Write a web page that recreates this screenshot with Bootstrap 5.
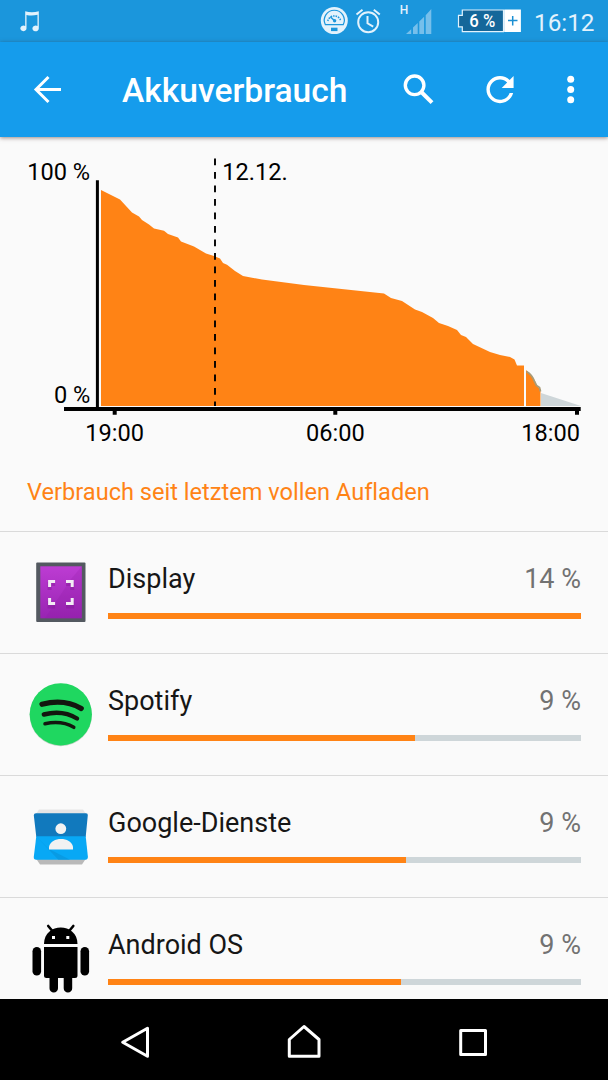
<!DOCTYPE html>
<html lang="de">
<head>
<meta charset="utf-8">
<meta name="viewport" content="width=device-width, initial-scale=1">
<title>Akkuverbrauch</title>
<link href="https://cdn.jsdelivr.net/npm/bootstrap@5.3.0/dist/css/bootstrap.min.css" rel="stylesheet">
<style>
  body { font-family: Roboto, "Noto Sans", sans-serif; font-variant-ligatures: none; background: #fafafa; color: #161616; width: 608px; height: 1080px; }
  svg { display: block; flex: none; }
  .statusbar { height: 42px; background: #1b96dc; color: #e3f2fc; }
  .clock { width: 77px; padding-left: 3px; font-size: 24.3px; line-height: 45px; white-space: nowrap; }
  .appbar { height: 95px; background: #159cec; color: #fff; box-shadow: 0 1px 4px rgba(60,30,20,.5); z-index: 2; }
  .appbar h1 { font-size: 33.6px; font-weight: 500; line-height: 40px; padding-left: 22px; padding-top: 2px; width: 286px; white-space: nowrap; }
  .since { height: 78px; color: #ff8315; font-size: 23.6px; line-height: 28px; padding: 25px 27px 0; }
  .usage-row { height: 122px; border-top: 1px solid #dadada; }
  .usage-body { padding: 30px 27px 0 0; font-size: 27px; line-height: 34px; }
  .share { color: #727272; }
  .usage-bar { height: 6px; margin-top: 17px; border-radius: 0; background: #ced6d9; }
  .usage-bar .progress-bar { background: #ff8315; }
  .navkeys { height: 81px; background: #000; }
</style>
</head>
<body class="d-flex flex-column overflow-hidden">

<header class="statusbar d-flex flex-shrink-0">
  <svg width="60" height="42" viewBox="0 0 60 42" fill="#e3f2fc">
    <path d="M25.2 11.2q6.500 2.100 13.600 0V28.500a3.200 2.900 0 1 1-1.300-2.400V14.800q-5.500 1.400-11 .2V28.500a3.100 2.800 0 1 1-1.300-2.400Z"/>
  </svg>
  <svg class="ms-auto" width="32" height="42" viewBox="319 0 32 42">
    <circle cx="334.300" cy="20.600" r="13.500" fill="#e3f2fc"/>
    <path d="M325.300 24.600a10 10 0 1 1 18 0Z" fill="none" stroke="#1b96dc" stroke-width="1.200"/>
    <path d="M327.800 21a6.700 6.700 0 0 1 13 0" fill="none" stroke="#1b96dc" stroke-width="1.500" stroke-dasharray="1.500 1"/>
    <path d="M330.300 16.800 334.500 20.800" stroke="#1b96dc" stroke-width="1.400"/>
    <circle cx="334.600" cy="20.800" r="1.700" fill="#1b96dc"/>
    <rect x="331" y="27.700" width="6.500" height="3.400" fill="#1b96dc"/>
  </svg>
  <svg width="39" height="42" viewBox="351 0 39 42" fill="none" stroke="#e3f2fc" stroke-width="2">
    <circle cx="368.200" cy="22.200" r="10"/>
    <path d="M367.500 16V23.300l5.700 3.400M356.500 14.500l6-4.800M373.800 9.700l6 4.800"/>
  </svg>
  <svg width="50" height="42" viewBox="390 0 50 42">
    <text x="399.800" y="14" font-size="12" font-weight="500" fill="#e3f2fc">H</text>
    <path fill="#76bfeb" d="M406 34l5.200-4.800V34ZM413 27.500l4.700-4.600V34H413ZM419.300 21.500l4.800-4.700V34h-4.800ZM425.700 15.200l5.600-6.200V34h-5.600Z"/>
  </svg>
  <svg width="91" height="42" viewBox="440 0 91 42">
    <path d="M462.300 10h41.200v21.600H462.300v-4.800H458.500V15.400h3.800Z" fill="#15679a" stroke="#e3f2fc" stroke-width="1.200"/>
    <rect x="504.200" y="9.500" width="16.700" height="22.500" fill="#fff"/>
    <path d="M508 20.600h9.500M512.700 16v9.500" stroke="#1b8fd2" stroke-width="1.500"/>
    <text x="469.300" y="26.800" font-size="17.500" font-weight="500" fill="#fff" textLength="26" lengthAdjust="spacingAndGlyphs">6 %</text>
  </svg>
  <div class="clock">16:12</div>
</header>

<nav class="appbar d-flex align-items-center flex-shrink-0 position-relative">
  <svg width="100" height="95" viewBox="0 42 100 95" fill="none" stroke="#fff" stroke-width="3">
    <path d="M61 89.500H36M48.500 77 36 89.500 48.500 102"/>
  </svg>
  <h1 class="mb-0">Akkuverbrauch</h1>
  <svg width="74" height="95" viewBox="386 42 74 95" fill="none" stroke="#fff">
    <circle cx="414.600" cy="85.300" r="9.300" stroke-width="3.400"/>
    <path d="M421.300 92 432 102.700" stroke-width="4"/>
  </svg>
  <svg width="85" height="95" viewBox="460 42 85 95">
    <path fill="#fff" transform="translate(479.600 69.200) scale(1.700)" d="M17.650 6.350C16.200 4.900 14.210 4 12 4c-4.420 0-7.990 3.580-7.990 8s3.570 8 7.990 8c3.730 0 6.840-2.550 7.730-6h-2.080c-.82 2.330-3.040 4-5.650 4-3.310 0-6-2.690-6-6s2.690-6 6-6c1.660 0 3.140.69 4.220 1.780L13 11h7V4l-2.350 2.350z"/>
  </svg>
  <svg width="63" height="95" viewBox="545 42 63 95" fill="#fff">
    <circle cx="570.700" cy="79.300" r="3.500"/><circle cx="570.700" cy="89.500" r="3.500"/><circle cx="570.700" cy="99.700" r="3.500"/>
  </svg>
</nav>

<main class="flex-grow-1 overflow-hidden">
  <svg width="608" height="316" viewBox="0 137 608 316" font-size="23.6" fill="#000">
    <path fill="#ff8315" d="M101 190L120 199.500L132 212.500L139 216.500L142 220L149 224.500L154 228.500L164 230.800L168 234L178 237.500L181 241.500L194 246.500L206 253.500L214 256L220 258.500L223 263L227 264.700L235 271L243 276L262 279.500L304 285L384 293.500L391 298L402 301L415 309.500L422 312L433 318L439 323L448 326L457 330L461 335L466 337L473 344L490 352L500 355L510 357L514.500 359.500L517 365.500H524V406H101Z"/>
    <path fill="#ff8315" d="M526 370l4 4 4.500 6 2 5.500 4 4V406H526Z"/>
    <path fill="#ced6d9" d="M541 393L581 406H541Z"/>
    <path fill="none" stroke="#a99b77" stroke-width="1.800" d="M526.500 371.500q5.500 3 8 10l2 4 3 2 1 4"/>
    <path d="M95.900 180.300h3V407H580.700v4H579v3.700h-4V411H337.300v3.700h-4V411H116.700v3.700h-4V411H64v-4H95.900Z"/>
    <path d="M215 158.500V406" stroke="#000" stroke-width="1.900" stroke-dasharray="6.750 6.750"/>
    <text x="27.200" y="180.300">100 %</text>
    <text x="222.300" y="180.300">12.12.</text>
    <text x="90.300" y="402.700" text-anchor="end">0 %</text>
    <text x="114.700" y="441" text-anchor="middle">19:00</text>
    <text x="335.300" y="441" text-anchor="middle">06:00</text>
    <text x="580" y="441" text-anchor="end">18:00</text>
  </svg>
  <div class="since">Verbrauch seit letztem vollen Aufladen</div>

  <div class="usage-row d-flex">
    <svg width="108" height="121" viewBox="0 532 108 121">
      <defs><linearGradient id="violet" x2="0" y2="1"><stop stop-color="#bd3cd3"/><stop offset="1" stop-color="#9824b2"/></linearGradient></defs>
      <rect x="36.200" y="562.500" width="49.300" height="59.500" rx="1" fill="#535960"/>
      <rect x="40.300" y="566.300" width="41.500" height="52" fill="url(#violet)"/>
      <path d="M81.800 566.300V618.300H45L71 579Z" fill="#8b189f" opacity=".2"/>
      <path d="M49.600 587V581h5.500M66 581h6.200v6M49.600 598v5.500h5.500M66 603.500h6.200V598" fill="none" stroke="#79148d" opacity=".35" stroke-width="4" transform="translate(0 3)"/>
      <path d="M49.600 587V581.500h5.500M66 581.500h6.200V587M49.600 598v5.500h5.500M66 603.500h6.200V598" fill="none" stroke="#f2ecf4" stroke-width="3"/>
    </svg>
    <div class="usage-body flex-grow-1">
      <div class="d-flex justify-content-between"><span>Display</span><span class="share">14 %</span></div>
      <div class="progress usage-bar"><div class="progress-bar" style="width:100%"></div></div>
    </div>
  </div>

  <div class="usage-row d-flex">
    <svg width="108" height="121" viewBox="0 654 108 121">
      <circle cx="60.800" cy="715" r="31.200" fill="#bdd4c3"/>
      <circle cx="60.800" cy="714.300" r="31.100" fill="#1fd760"/>
      <g fill="none" stroke="#13160f" stroke-linecap="round">
        <path d="M42 704.200Q64.500 698.500 81.200 708.500" stroke-width="5.300"/>
        <path d="M43.800 714.500Q62.500 709.500 77 718.500" stroke-width="4.400"/>
        <path d="M45 723.800Q61.500 720.200 73.800 727.300" stroke-width="3.500"/>
      </g>
    </svg>
    <div class="usage-body flex-grow-1">
      <div class="d-flex justify-content-between"><span>Spotify</span><span class="share">9 %</span></div>
      <div class="progress usage-bar"><div class="progress-bar" style="width:65%"></div></div>
    </div>
  </div>

  <div class="usage-row d-flex">
    <svg width="108" height="121" viewBox="0 776 108 121">
      <path d="M36 814l3-4.500h44l3 4.500Z" fill="#e5e5e5"/>
      <path d="M36 858.500h50l-4 6H40Z" fill="#b9b9b9"/>
      <path d="M36 813.300H86q2 0 1.800 2L85.700 837H36.300L33.800 815.300q0-2 2.200-2Z" fill="#1179bd"/>
      <path d="M36.300 836.300H85.700l2.200 20.500q0 3-2.500 3H36.300q-2.800 0-2.500-3Z" fill="#08a8f5"/>
      <path d="M36.300 836.300l22 23.500H70L48.500 848.800Z" fill="#078dd3" opacity=".5"/>
      <circle cx="60.800" cy="828.700" r="5.400" fill="#f2f2f2"/>
      <path d="M49 849.500v-2.700c2-10.500 22-10.500 24 0v2.700Z" fill="#f2f2f2"/>
    </svg>
    <div class="usage-body flex-grow-1">
      <div class="d-flex justify-content-between"><span>Google-Dienste</span><span class="share">9 %</span></div>
      <div class="progress usage-bar"><div class="progress-bar" style="width:63.1%"></div></div>
    </div>
  </div>

  <div class="usage-row d-flex">
    <svg width="108" height="121" viewBox="0 898 108 121">
      <path d="M44 944c0-22 33.500-22 33.500 0Z"/>
      <path d="M48.200 926l5 6M73.300 926l-5 6" stroke="#000" stroke-width="2.600" stroke-linecap="round"/>
      <path d="M44 947H77.500V975.500q0 2.500-2.500 2.500H72.200v10.300a4.200 4.200 0 0 1-8.500 0V978H58v10.300a4.200 4.200 0 0 1-8.500 0V978H46.500Q44 978 44 975.500Z"/>
      <rect x="32.500" y="947" width="8.600" height="28.500" rx="4.300"/><rect x="80.500" y="947" width="8.600" height="28.500" rx="4.300"/>
      <rect x="52" y="936" width="3" height="3" fill="#fff"/><rect x="66.300" y="936" width="3" height="3" fill="#fff"/>
    </svg>
    <div class="usage-body flex-grow-1">
      <div class="d-flex justify-content-between"><span>Android OS</span><span class="share">9 %</span></div>
      <div class="progress usage-bar"><div class="progress-bar" style="width:62%"></div></div>
    </div>
  </div>
</main>

<footer class="navkeys d-flex justify-content-center flex-shrink-0">
  <svg width="169" height="81" viewBox="51 999 169 81" fill="none" stroke="#fff" stroke-width="3" stroke-linejoin="round"><path d="M122.700 1042.300 147.500 1028.200V1056.300Z"/></svg>
  <svg width="169" height="81" viewBox="220 999 169 81" fill="none" stroke="#fff" stroke-width="3" stroke-linejoin="round"><path d="M304 1026.500 319 1039.500V1056.300H289.300V1039.500Z"/></svg>
  <svg width="169" height="81" viewBox="389 999 169 81" fill="none" stroke="#fff" stroke-width="3" stroke-linejoin="round"><path d="M460.700 1030.500H485.500V1054.500H460.700Z"/></svg>
</footer>

<script src="https://cdn.jsdelivr.net/npm/bootstrap@5.3.0/dist/js/bootstrap.bundle.min.js"></script>
</body>
</html>
